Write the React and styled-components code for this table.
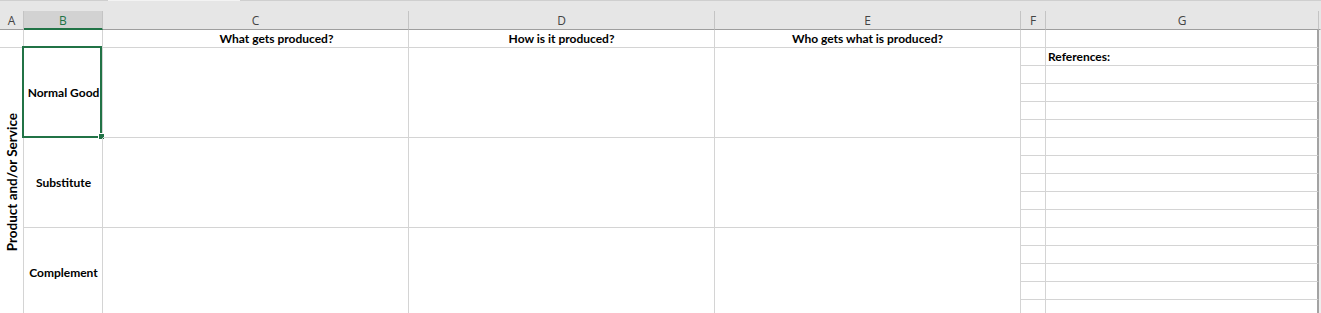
import React from 'react';
import styled, { createGlobalStyle } from 'styled-components';

const GlobalStyle = createGlobalStyle`
  html, body {
    margin: 0;
    padding: 0;
    background: #ffffff;
    overflow: hidden;
  }
  body {
    font-family: 'Lato', 'Liberation Sans', sans-serif;
  }
`;

const Window = styled.div`
  width: 1321px;
  height: 313px;
  overflow: hidden;
  background: #e6e6e6;
`;

// thin strip above the column letters, with the tab edges showing through
const TopStrip = styled.div`
  height: 11px;
  display: flex;
  background: #e6e6e6;
`;

const StripEdge = styled.div`
  height: 1px;
  width: ${p => p.$w};
  flex: ${p => (p.$grow ? 1 : 'none')};
  background: ${p => p.$light ? '#f3f3f3' : '#cfcfcf'};
`;

const Sheet = styled.div`
  display: grid;
  grid-template-columns: 24px 79px 306px 306px 306px 25px 273px 1fr;
  grid-template-rows: 19px repeat(16, 18px);
  background: #ffffff;
`;

const ColHead = styled.div`
  box-sizing: border-box;
  display: flex;
  align-items: center;
  justify-content: center;
  background: ${p => (p.$selected ? '#d2d2d2' : '#e6e6e6')};
  border-right: 1px solid ${p => (p.$last ? '#e6e6e6' : '#c4c4c4')};
  border-bottom: ${p => (p.$selected ? '2px solid #217346' : '1px solid #9e9e9e')};
  color: ${p => (p.$selected ? '#217346' : '#444444')};
  font-family: 'Open Sans', 'Noto Sans', sans-serif;
  font-size: 12px;
  padding-top: ${p => (p.$selected ? '1px' : '0')};
`;

const Cell = styled.div`
  box-sizing: border-box;
  position: relative;
  grid-column: ${p => p.$col};
  grid-row: ${p => p.$row} / span ${p => p.$span || 1};
  display: flex;
  align-items: ${p => p.$valign || 'flex-end'};
  justify-content: ${p => p.$align || 'center'};
  border-right: ${p => (p.$edge ? '2px solid #a3a3a3' : '1px solid #d4d4d4')};
  border-bottom: 1px solid #d4d4d4;
  color: #000000;
  font-size: 12px;
  font-weight: 700;
  white-space: nowrap;
  padding: ${p => p.$pad || '0 0 1px'};
`;

const Gutter = styled.div`
  grid-column: 8;
  grid-row: 2 / span 16;
  background: #eeeeee;
`;

const SideLabel = styled.span`
  writing-mode: vertical-rl;
  transform: rotate(180deg);
  font-size: 13.5px;
  font-weight: 700;
  margin-left: 1px;
`;

// green frame around the active cell, drawn over the grid lines
const ActiveFrame = styled.div`
  position: absolute;
  left: -2px;
  top: -2px;
  right: 0;
  bottom: -1px;
  border: 2px solid #217346;
  pointer-events: none;
`;

const FillHandle = styled.div`
  position: absolute;
  right: -4px;
  bottom: -3px;
  width: 5px;
  height: 5px;
  background: #217346;
  outline: 1px solid #ffffff;
`;

const columns = ['A', 'B', 'C', 'D', 'E', 'F', 'G', ''];

const questions = [
  { col: 3, text: 'What gets produced?', pad: '0 0 1px 42px' },
  { col: 4, text: 'How is it produced?' },
  { col: 5, text: 'Who gets what is produced?' },
];

const goods = ['Normal Good', 'Substitute', 'Complement'];

const App = () => {
  const sideRows = Array.from({ length: 16 }, (_, i) => i + 2);

  return (
    <Window>
      <GlobalStyle />
      <TopStrip>
        <StripEdge $w="108px" />
        <StripEdge $w="132px" $light />
        <StripEdge $w="90px" />
        <StripEdge $grow />
      </TopStrip>
      <Sheet>
        {columns.map((c, i) => (
          <ColHead key={i} $selected={c === 'B'} $last={i === columns.length - 1}>
            {c}
          </ColHead>
        ))}

        {/* row 1: headings */}
        <Cell $col={1} $row={2} />
        <Cell $col={2} $row={2} />
        {questions.map(q => (
          <Cell key={q.col} $col={q.col} $row={2} $pad={q.pad}>{q.text}</Cell>
        ))}

        {/* merged label down column A */}
        <Cell $col={1} $row={3} $span={15} $valign="center">
          <SideLabel>Product and/or Service</SideLabel>
        </Cell>

        {goods.map((g, i) => (
          <React.Fragment key={g}>
            <Cell $col={2} $row={3 + i * 5} $span={5} $valign="center" $pad="0 0 0 1px">
              {g}
              {i === 0 && (
                <ActiveFrame>
                  <FillHandle />
                </ActiveFrame>
              )}
            </Cell>
            {questions.map(q => (
              <Cell key={q.col} $col={q.col} $row={3 + i * 5} $span={5} />
            ))}
          </React.Fragment>
        ))}

        {/* notes area in F and G */}
        {sideRows.map(r => (
          <React.Fragment key={r}>
            <Cell $col={6} $row={r} />
            <Cell $col={7} $row={r} $edge $align="flex-start" $pad="0 0 1px 2px">
              {r === 3 ? 'References:' : ''}
            </Cell>
          </React.Fragment>
        ))}

        <Gutter />
      </Sheet>
    </Window>
  );
};

export default App;
